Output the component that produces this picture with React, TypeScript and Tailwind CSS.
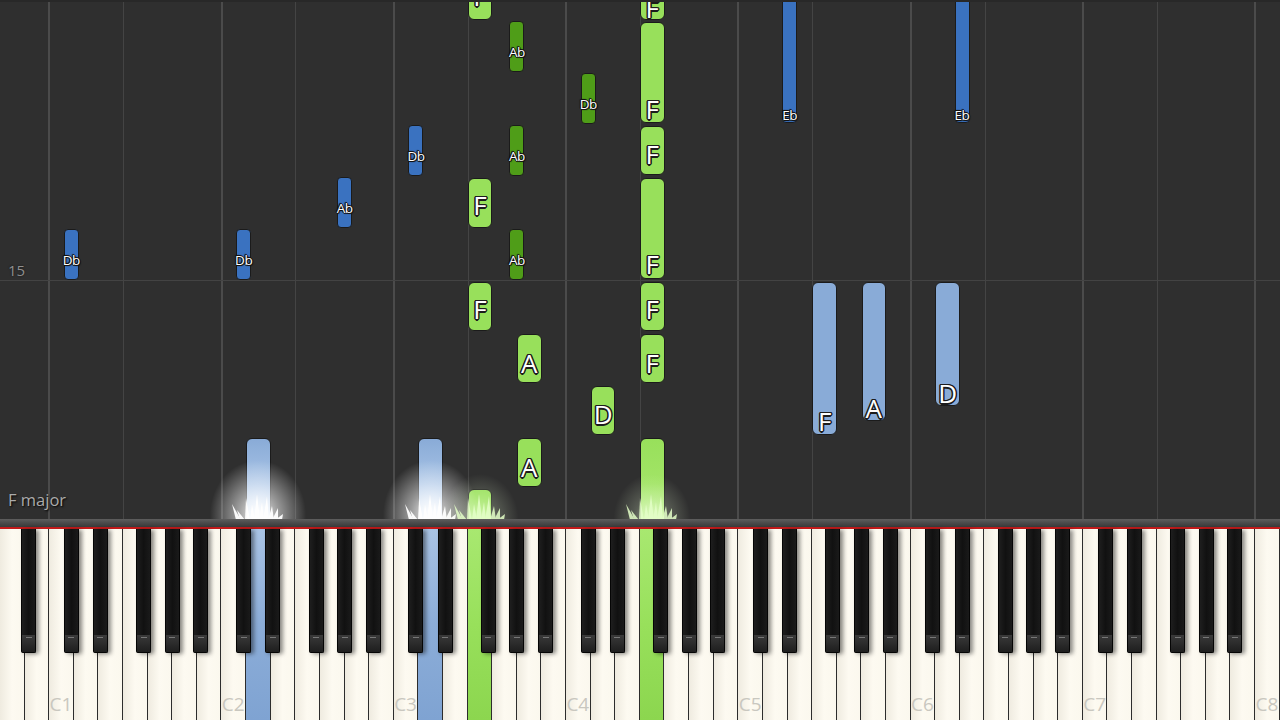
import React from "react";

const W = 1280 / 52;

type Kind = "lg" | "dg" | "lb" | "db";

interface Note {
  kind: Kind;
  x: number;
  w: number;
  top: number;
  bottom: number;
  label?: string;
  ly?: number;
  held?: boolean;
}

const fill: Record<Kind, string> = {
  lg: "bg-[#98e05b]",
  dg: "bg-[#4f9d18]",
  lb: "bg-[#89abd7]",
  db: "bg-[#3a72c0]",
};

const held: Record<string, string> = {
  lg: "bg-gradient-to-b from-[#98e05b] via-[#a2e466] to-[#d4f5b0]",
  lb: "bg-gradient-to-b from-[#89abd7] via-[#a9c4e6] to-[#eef5fd]",
};

const white = (i: number) => ({ x: i * W, w: W });
const black = (b: number, off: number) => ({ x: b * W + off - 7.5, w: 15 });

const n = (
  kind: Kind,
  pos: { x: number; w: number },
  top: number,
  bottom: number,
  label?: string,
  ly?: number,
  isHeld?: boolean
): Note => ({ kind, ...pos, top, bottom, label, ly, held: isHeld });

const notes: Note[] = [
  // left hand, dark blue
  n("db", black(3, -2.5), 229, 280, "Db", 260),
  n("db", black(10, -2.5), 229, 280, "Db", 260),
  n("db", black(14, 0), 177, 228, "Ab", 208),
  n("db", black(17, -2.5), 125, 176, "Db", 156),
  n("db", black(32, 2), -12, 123, "Eb", 115),
  n("db", black(39, 2), -12, 123, "Eb", 115),
  // right hand, dark green
  n("dg", black(21, 0), 21, 72, "Ab", 52),
  n("dg", black(21, 0), 125, 176, "Ab", 156),
  n("dg", black(21, 0), 229, 280, "Ab", 260),
  n("dg", black(24, -2.5), 73, 124, "Db", 104),
  // right hand, light green
  n("lg", white(19), -32, 20, "F", -5),
  n("lg", white(19), 178, 228, "F", 204),
  n("lg", white(19), 282, 331, "F", 308),
  n("lg", white(19), 489, 530, undefined, undefined, true),
  n("lg", white(21), 334, 383, "A", 362),
  n("lg", white(21), 438, 487, "A", 466),
  n("lg", white(24), 386, 435, "D", 413),
  n("lg", white(26), -32, 20, "F", 7),
  n("lg", white(26), 22, 123, "F", 108),
  n("lg", white(26), 126, 175, "F", 153),
  n("lg", white(26), 178, 279, "F", 263),
  n("lg", white(26), 282, 331, "F", 308),
  n("lg", white(26), 334, 383, "F", 362),
  n("lg", white(26), 438, 530, undefined, undefined, true),
  // left hand, light blue
  n("lb", white(10), 438, 530, undefined, undefined, true),
  n("lb", white(17), 438, 530, undefined, undefined, true),
  n("lb", white(33), 282, 435, "F", 420),
  n("lb", white(35), 282, 421, "A", 407),
  n("lb", white(38), 282, 406, "D", 392),
];

const bigOutline =
  "[text-shadow:-1.5px_0_0_#1c1c1c,1.5px_0_0_#1c1c1c,0_-1.5px_0_#1c1c1c,0_1.5px_0_#1c1c1c,-1px_-1px_0_#1c1c1c,1px_1px_0_#1c1c1c,-1px_1px_0_#1c1c1c,1px_-1px_0_#1c1c1c]";
const smallOutline =
  "[text-shadow:-1px_0_0_#111,1px_0_0_#111,0_-1px_0_#111,0_1px_0_#111,-1px_-1px_1px_#111,1px_1px_1px_#111]";

// pressed keys: white index and colour
const pressed: Record<number, string> = {
  10: "bg-gradient-to-b from-[#a9c3e4] via-[#8cadd8] to-[#7fa3d2]",
  17: "bg-gradient-to-b from-[#a9c3e4] via-[#8cadd8] to-[#7fa3d2]",
  19: "bg-gradient-to-b from-[#a8e870] via-[#98e05b] to-[#8cd64f]",
  26: "bg-gradient-to-b from-[#a8e870] via-[#98e05b] to-[#8cd64f]",
};

const glows: { i: number; tint: string; strong: boolean }[] = [
  { i: 10, tint: "#ffffff", strong: true },
  { i: 17, tint: "#ffffff", strong: true },
  { i: 19, tint: "#e4ffc8", strong: false },
  { i: 26, tint: "#e4ffc8", strong: false },
];

function Glow({ i, tint, strong }: { i: number; tint: string; strong: boolean }) {
  const cx = i * W + W / 2;
  return (
    <>
      <div
        className={
          strong
            ? "absolute w-[100px] h-[76px] bg-[radial-gradient(ellipse_at_50%_75%,rgba(255,255,255,0.95)_0%,rgba(255,255,255,0.5)_30%,rgba(255,255,255,0)_68%)]"
            : "absolute w-[84px] h-[62px] bg-[radial-gradient(ellipse_at_50%_80%,rgba(235,255,215,0.6)_0%,rgba(235,255,215,0.22)_30%,rgba(255,255,255,0)_65%)]"
        }
        style={{ left: cx - (strong ? 50 : 42), top: strong ? 458 : 470 }}
      />
      <svg
        className="absolute"
        width="52"
        height="30"
        viewBox="0 0 52 30"
        style={{ left: cx - 26, top: 490 }}
      >
        <g fill={tint} opacity={strong ? 0.95 : 0.85}>
          <polygon points="4,30 0,14 9,30" />
          <polygon points="8,30 5,20 13,30" />
          <polygon points="13,30 14,8 18,30" />
          <polygon points="18,30 20,14 23,30" />
          <polygon points="22,30 25,4 28,30" />
          <polygon points="27,30 30,12 32,30" />
          <polygon points="31,30 35,6 37,30" />
          <polygon points="36,30 40,16 42,30" />
          <polygon points="40,30 46,18 46,30" />
          <polygon points="43,30 51,24 50,30" />
        </g>
      </svg>
    </>
  );
}

function NoteBar({ note }: { note: Note }) {
  const isBlack = note.w < 20;
  const bg = note.held ? held[note.kind] : fill[note.kind];
  return (
    <div
      className={`absolute border border-[#1b1b1b] ${isBlack ? "rounded-[4px]" : "rounded-[6px]"} ${bg}`}
      style={{ left: note.x, top: note.top, width: note.w, height: note.bottom - note.top }}
    >
      {note.label && (
        <span
          className={`absolute left-1/2 -translate-x-1/2 -translate-y-1/2 leading-none whitespace-nowrap text-white ${
            isBlack ? `text-[13.5px] tracking-[-0.5px] ${smallOutline}` : `text-[26px] ${bigOutline}`
          }`}
          style={{ top: (note.ly ?? 0) - note.top }}
        >
          {note.label}
        </span>
      )}
    </div>
  );
}

const blackOffsets: [number, number][] = [[1, 4]];
for (let k = 0; k < 7; k++) {
  const c = 2 + 7 * k;
  blackOffsets.push([c + 1, -2.5], [c + 2, 2], [c + 4, -4], [c + 5, 0], [c + 6, 4]);
}

export default function App() {
  return (
    <div className="w-[1280px] h-[720px] overflow-hidden bg-[#2f2f2f] flex flex-col font-['Open_Sans','Noto_Sans',sans-serif]">
      {/* note roll */}
      <div className="relative h-[519px] overflow-hidden">
        {Array.from({ length: 8 }, (_, k) => (
          <div
            key={`c${k}`}
            className="absolute top-0 bottom-0 w-[2px] bg-[#4b4b4b]"
            style={{ left: (2 + 7 * k) * W - 1 }}
          />
        ))}
        {Array.from({ length: 7 }, (_, k) => (
          <div
            key={`f${k}`}
            className="absolute top-0 bottom-0 w-px bg-[#444444]"
            style={{ left: (5 + 7 * k) * W }}
          />
        ))}
        <div className="absolute left-0 right-0 top-[280px] h-px bg-[#434343]" />
        <span className="absolute left-[8px] top-[259px] text-[15px] text-[#8f8f8f] [text-shadow:0_0_2px_#111]">
          15
        </span>
        <span className="absolute left-[8px] top-[488px] text-[16.5px] text-[#ababab] [text-shadow:1px_1px_2px_#000]">
          F major
        </span>
        {notes.map((note, idx) => (
          <NoteBar key={idx} note={note} />
        ))}
        {glows.map((g) => (
          <Glow key={g.i} {...g} />
        ))}
        <div className="absolute left-0 right-0 top-0 h-[2px] bg-[#282828]" />
      </div>

      {/* keyboard */}
      <div className="h-[8px] bg-gradient-to-b from-[#5e5e5e] via-[#4a4a4a] to-[#3a3a3a]" />
      <div className="h-[2px] bg-[#c21a1a]" />
      <div className="relative h-[191px] flex">
        {Array.from({ length: 52 }, (_, i) => {
          const isC = (i - 2) % 7 === 0 && i >= 2;
          return (
            <div
              key={i}
              className={`relative flex-1 h-full border-r border-[#2c2c2c] flex items-end justify-center pb-[6px] ${
                pressed[i] ?? "bg-gradient-to-r from-[#efebe0] via-[#fdfaf1] to-[#fbf8ee]"
              }`}
            >
              {isC && (
                <span className="text-[19px] leading-none text-[#c9c7bf]">C{(i - 2) / 7 + 1}</span>
              )}
            </div>
          );
        })}
        {blackOffsets.map(([b, off]) => (
          <div
            key={b}
            className="absolute top-0 w-[15px] h-[124px] flex flex-col bg-[#0b0b0b] rounded-b-[2px] shadow-[3px_1px_4px_rgba(0,0,0,0.45)] border-x border-b border-[#050505]"
            style={{ left: b * W + off - 7.5 }}
          >
            <div className="flex-1 bg-gradient-to-r from-[#1e1e1e] via-[#111111] to-[#1a1a1a]" />
            <div className="h-[17px] flex flex-col items-center bg-gradient-to-b from-[#3a3a3a] to-[#1e1e1e]">
              <div className="mt-[2px] w-[6px] h-px bg-[#777]" />
            </div>
          </div>
        ))}
      </div>
    </div>
  );
}
